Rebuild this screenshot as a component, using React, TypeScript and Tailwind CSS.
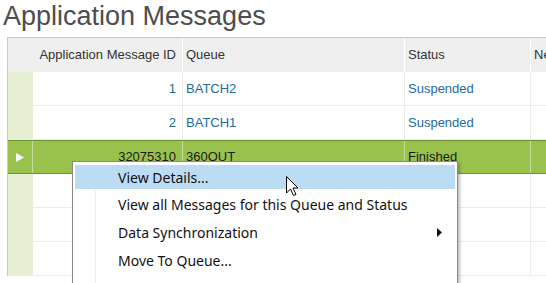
import React from 'react';

const rows = [
  { id: '1', queue: 'BATCH2', status: 'Suspended' },
  { id: '2', queue: 'BATCH1', status: 'Suspended' },
  { id: '32075310', queue: '360OUT', status: 'Finished', selected: true },
  { id: '', queue: '', status: '' },
  { id: '', queue: '', status: '' },
  { id: '', queue: '', status: '' },
];

const menuItems = [
  { label: 'View Details...', active: true },
  { label: 'View all Messages for this Queue and Status' },
  { label: 'Data Synchronization', submenu: true },
  { label: 'Move To Queue...' },
  { label: 'Move to Queue and Restart Current Queue', disabled: true },
];

const App = () => {
  return (
    <div className="relative w-[546px] h-[283px] overflow-hidden bg-white" style={{ fontFamily: '"Liberation Sans", Arial, sans-serif' }}>
      <h1 className="pl-[3px] pt-[1px] h-[37px] text-[27px] leading-[30px] text-[#4d4d4d]">Application Messages</h1>

      <div className="ml-[7px] w-[600px] border-l border-t border-[#c9c9c9] text-[13px]">
        {/* header */}
        <div className="flex h-[34px] bg-[#efefef] text-[#333]">
          <div className="w-[25px]" />
          <div className="w-[150px] flex items-center justify-end pr-[6px] border-r border-white">Application Message ID</div>
          <div className="w-[222px] flex items-center pl-[3px] border-r border-white">Queue</div>
          <div className="w-[126px] flex items-center pl-[3px] border-r border-white">Status</div>
          <div className="flex-1 flex items-center pl-[3px]">Next Run</div>
        </div>

        {rows.map((r, i) =>
          r.selected ? (
            <div key={i} className="flex h-[34px] bg-[#99c24d] border-y border-[#6f9232] text-[#1a1a1a]">
              <div className="w-[25px] flex items-center justify-center border-r border-[#c5dc9b]">
                <svg width="8" height="9" viewBox="0 0 8 9"><path d="M0 0L8 4.5L0 9Z" fill="#fff" /></svg>
              </div>
              <div className="w-[150px] flex items-center justify-end pr-[6px] border-r border-[#c5dc9b]">{r.id}</div>
              <div className="w-[222px] flex items-center pl-[3px] border-r border-[#c5dc9b]">{r.queue}</div>
              <div className="w-[126px] flex items-center pl-[3px] border-r border-[#c5dc9b]">{r.status}</div>
              <div className="flex-1" />
            </div>
          ) : (
            <div key={i} className="flex h-[34px] border-b border-[#ececec] text-[#236a9c]">
              <div className="w-[25px] bg-[#e7efd3]" />
              <div className="w-[150px] flex items-center justify-end pr-[6px] border-r border-[#ececec]">{r.id}</div>
              <div className="w-[222px] flex items-center pl-[3px] border-r border-[#ececec]">{r.queue}</div>
              <div className="w-[126px] flex items-center pl-[3px] border-r border-[#ececec]">{r.status}</div>
              <div className="flex-1" />
            </div>
          )
        )}
      </div>

      {/* context menu */}
      <div
        className="absolute left-[72px] top-[161px] w-[386px] bg-white border border-[#888] shadow-[2px_2px_3px_rgba(0,0,0,0.25)] pt-[3px] pl-[2px] pr-[2px] text-[14px] text-[#111]"
        style={{ fontFamily: '"Segoe UI", "Noto Sans", sans-serif' }}
      >
        <div className="absolute left-[22px] top-[28px] bottom-0 w-px bg-[#efefef]" />
        {menuItems.map((m, i) => (
          <div
            key={i}
            className={`relative flex items-center pl-[43px] ${m.active ? 'bg-[#bcdcf4] h-[24px] mb-px' : 'h-[28px]'} ${m.disabled ? 'text-[#a0a0a0]' : ''}`}
          >
            <span className="flex-1">{m.label}</span>
            {m.submenu && (
              <svg className="mr-[13px]" width="5" height="9" viewBox="0 0 5 9"><path d="M0 0L5 4.5L0 9Z" fill="#111" /></svg>
            )}
          </div>
        ))}
      </div>

      {/* mouse pointer */}
      <svg className="absolute left-[286px] top-[176px]" width="13" height="21" viewBox="0 0 13 21">
        <path d="M0.5 0.5L0.5 17L4.5 13L7.5 19.5L10 18.5L7 12L12 12Z" fill="#fff" stroke="#000" strokeWidth="1" strokeLinejoin="miter" />
      </svg>
    </div>
  );
};

export default App;
